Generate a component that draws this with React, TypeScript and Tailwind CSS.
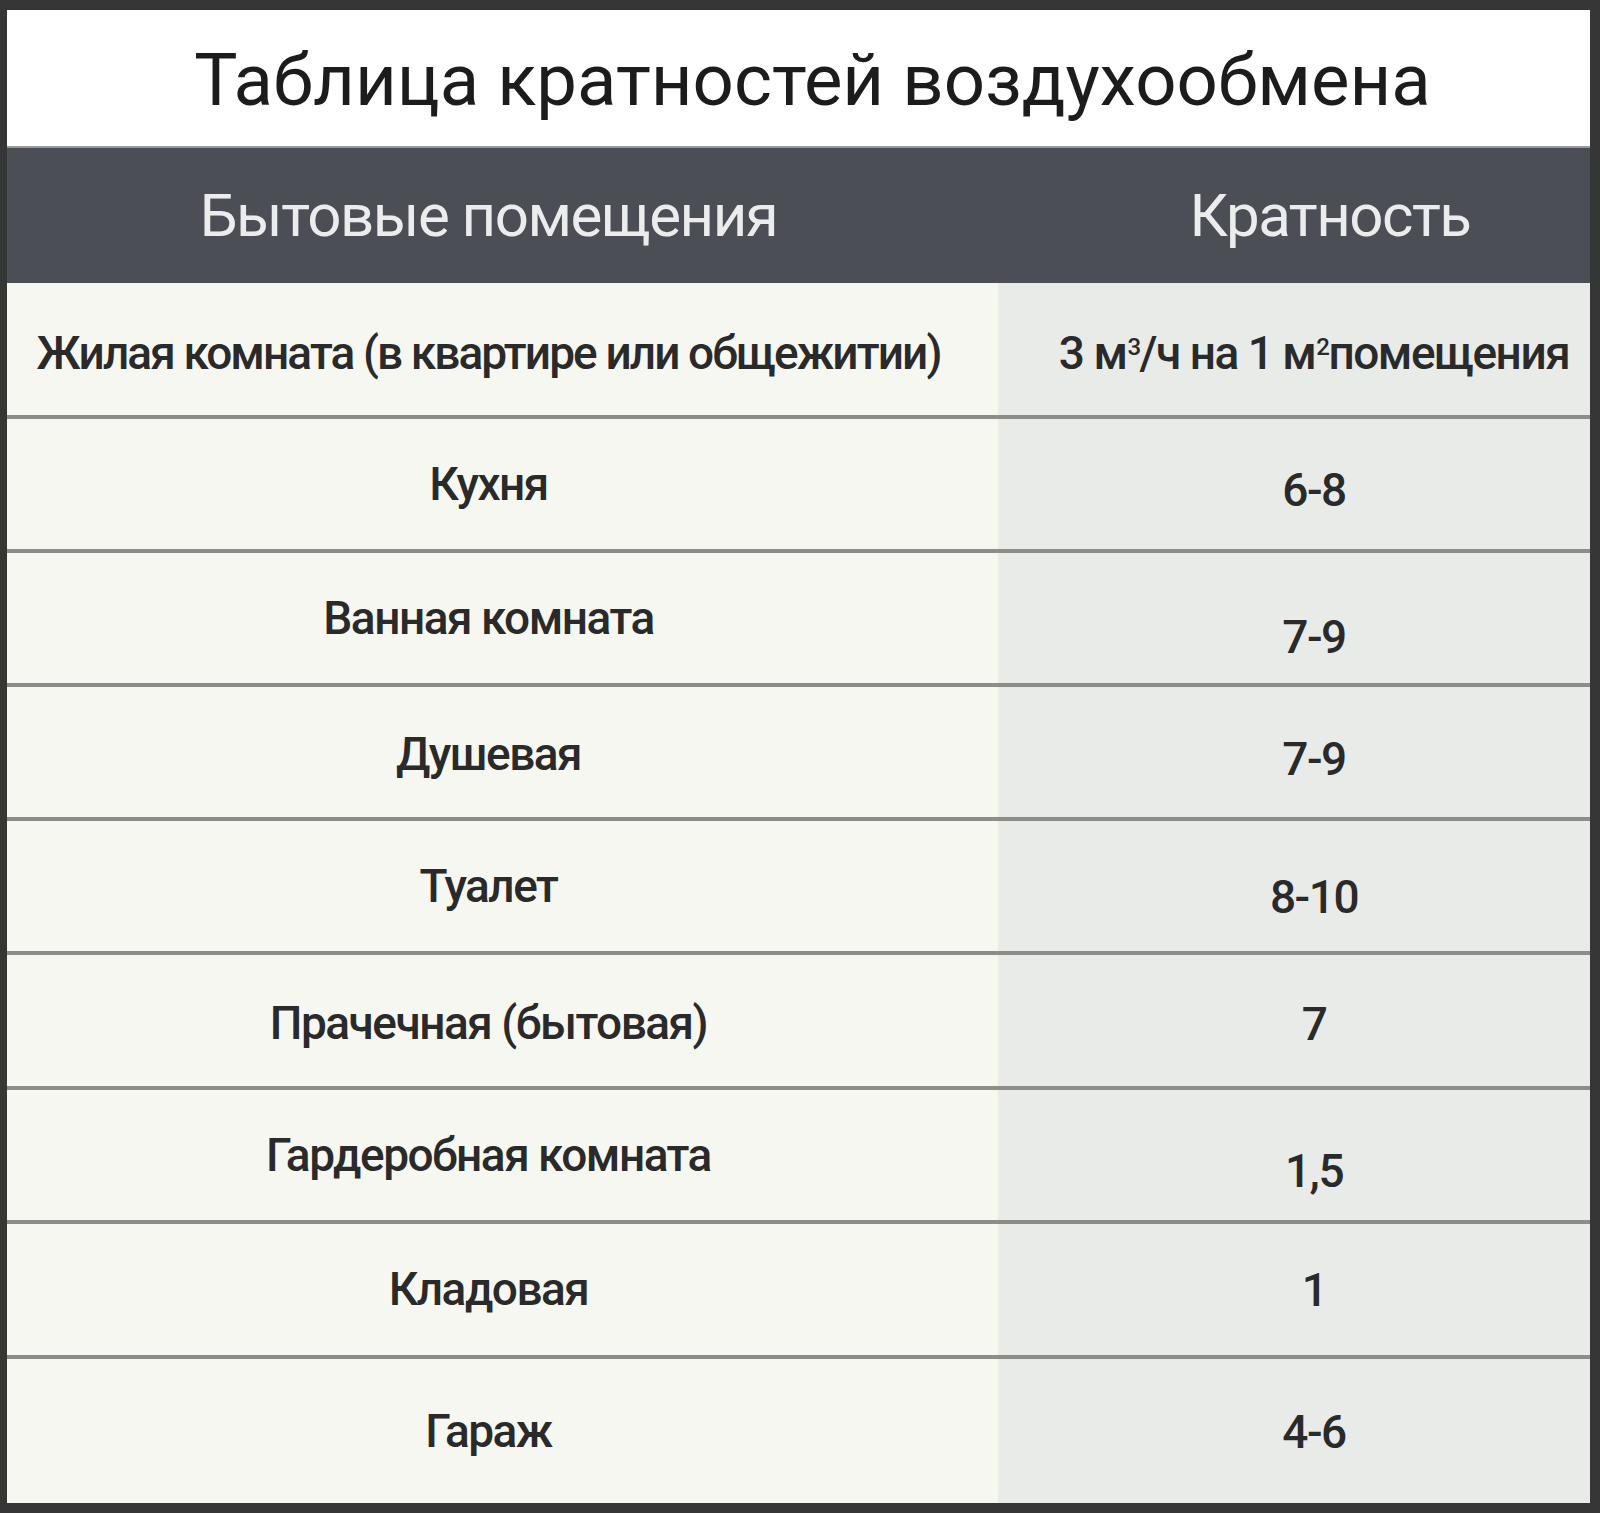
import React from 'react';

type Row = { room: string; value: React.ReactNode; roomShift: string; valueShift: string; h: string };

const Sup = ({ children }: { children: React.ReactNode }) => (
  <span className="ml-[1px] inline-block align-[14px] text-[24px] leading-none">{children}</span>
);

const rows: Row[] = [
  {
    room: 'Жилая комната (в квартире или общежитии)',
    value: (
      <>
        3 м<Sup>3</Sup>/ч на 1 м<Sup>2</Sup>помещения
      </>
    ),
    roomShift: 'pt-[8px] tracking-[-1.9px]',
    valueShift: 'pt-[8px]',
    h: 'h-[132px]',
  },
  { room: 'Кухня', value: '6-8', roomShift: 'pt-0', valueShift: 'pt-[12px]', h: 'h-[134px]' },
  { room: 'Ванная комната', value: '7-9', roomShift: 'pt-0', valueShift: 'pt-[38px]', h: 'h-[134px]' },
  { room: 'Душевая', value: '7-9', roomShift: 'pt-[4px]', valueShift: 'pt-[14px]', h: 'h-[134px]' },
  { room: 'Туалет', value: '8-10', roomShift: 'pt-0', valueShift: 'pt-[22px]', h: 'h-[134px]' },
  { room: 'Прачечная (бытовая)', value: '7', roomShift: 'pt-[6px]', valueShift: 'pt-[8px]', h: 'h-[135px]' },
  { room: 'Гардеробная комната', value: '1,5', roomShift: 'pt-0', valueShift: 'pt-[32px]', h: 'h-[134px]' },
  { room: 'Кладовая', value: '1', roomShift: 'pt-0', valueShift: 'pt-[2px]', h: 'h-[135px]' },
  { room: 'Гараж', value: '4-6', roomShift: 'pt-0', valueShift: 'pt-[2px]', h: 'flex-1' },
];

export default function App() {
  return (
    <div className="flex h-[1513px] w-[1600px] flex-col border-t-[10px] border-r-[10px] border-b-[10px] border-l-[7px] border-[#363636] bg-[#f7f7f2] font-['Roboto',sans-serif]">
      <div className="flex h-[136px] items-center justify-center bg-white pt-[6px] pl-[28px] text-[72.5px] text-[#1c1c1c]">
        Таблица кратностей воздухообмена
      </div>
      <div className="h-[2px] bg-[#9a9a9a]" />
      <div className="flex h-[135px] bg-[#4b4e55] text-[60px] tracking-[-1.5px] text-[#ececec]">
        <div className="flex w-[991px] items-center justify-center pr-[28px]">Бытовые помещения</div>
        <div className="flex flex-1 items-center justify-center pl-[72px]">Кратность</div>
      </div>
      {rows.map((r, i) => (
        <div key={i} className={`flex flex-col ${r.h}`}>
          {i > 0 && <div className="h-[4px] bg-[#8c8c88]" />}
          <div className="flex flex-1 text-[46px] font-medium tracking-[-1.5px] text-[#2a2a2a]">
            <div className={`flex w-[991px] items-center justify-center pr-[28px] ${r.roomShift}`}>{r.room}</div>
            <div className={`flex flex-1 items-center justify-center bg-[#e9ebe8] pl-[40px] ${r.valueShift}`}>
              <span>{r.value}</span>
            </div>
          </div>
        </div>
      ))}
    </div>
  );
}
